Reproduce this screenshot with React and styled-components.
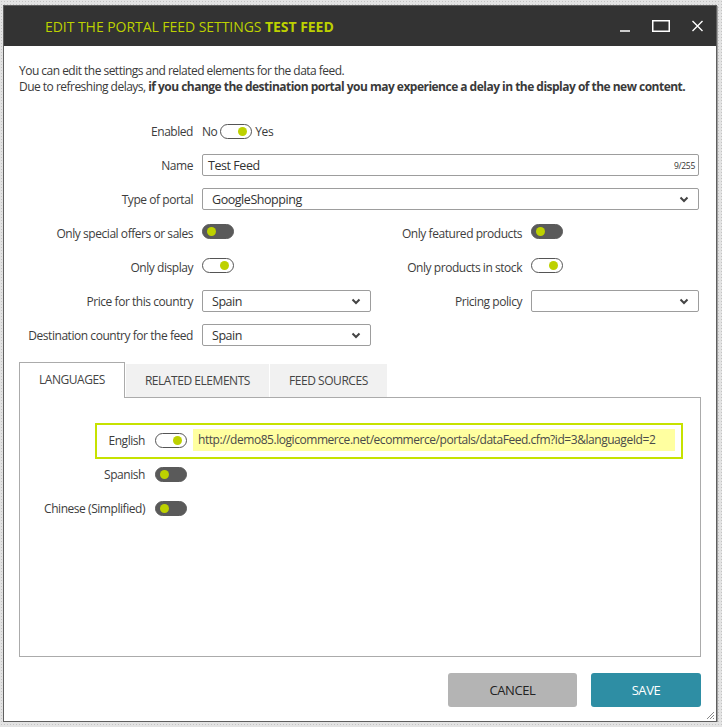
import styled, { createGlobalStyle } from "styled-components";

const lime = "#bdd100";

const GlobalStyle = createGlobalStyle`
  html, body { margin: 0; }
  body {
    background-color: #e3e3e3;
    background-image: radial-gradient(#c3c3c3 0.7px, transparent 0.9px);
    background-size: 3px 3px;
    font-family: "Open Sans", "Liberation Sans", sans-serif;
    font-size: 12px;
    letter-spacing: -0.45px;
    color: #3a3a3a;
  }
`;

const Window = styled.div`
  position: relative;
  box-sizing: border-box;
  width: 714px;
  height: 717px;
  margin: 5px 0 0 3px;
  background: #fff;
  border: 1px solid #5f5f5f;
  box-shadow: 1px 1px 0 #a0a0a0;
  display: flex;
  flex-direction: column;
`;

const TitleBar = styled.header`
  height: 40px;
  flex: none;
  background: #333;
  display: flex;
  align-items: center;
  justify-content: space-between;
  padding: 0 13px 0 41px;
`;

const Title = styled.h1`
  margin: 0;
  font-size: 14px;
  font-weight: 400;
  letter-spacing: -0.05px;
  color: ${lime};
  b { font-weight: 700; }
`;

const WindowControls = styled.div`
  display: flex;
  align-items: center;
  gap: 22px;
  svg { display: block; }
`;

const Body = styled.div`
  flex: 1;
  display: flex;
  flex-direction: column;
  padding: 17px 15px 14px 15px;
  min-height: 0;
`;

const Intro = styled.p`
  margin: 0;
  line-height: 16px;
  letter-spacing: -0.52px;
  b { font-weight: 700; }
`;

const FormGrid = styled.div`
  margin-top: 25px;
  display: grid;
  grid-template-columns: 174px 169px 142px 168px;
  grid-auto-rows: 22px;
  column-gap: 9px;
  row-gap: 12px;
  align-items: center;
`;

const Label = styled.label`
  text-align: right;
  white-space: nowrap;
  color: #3d3d3d;
`;

const Inline = styled.div`
  grid-column: 2 / 5;
  display: flex;
  align-items: center;
  gap: 3px;
`;

const Toggle = styled.span`
  position: relative;
  display: inline-block;
  flex: none;
  box-sizing: border-box;
  width: 32px;
  height: 15px;
  border-radius: 8px;
  border: 1px solid ${(p) => (p.$on ? "#555" : "#5a5a5a")};
  background: ${(p) => (p.$on ? "#fff" : "#5a5a5a")};
  &::after {
    content: "";
    position: absolute;
    top: 2px;
    ${(p) => (p.$on ? "right: 4px;" : "left: 4px;")}
    width: 9px;
    height: 9px;
    border-radius: 50%;
    background: ${lime};
  }
`;

const Field = styled.div`
  position: relative;
  grid-column: ${(p) => p.$span || "auto"};
  box-sizing: border-box;
  height: 22px;
  border: 1px solid #9d9d9d;
  border-radius: 2px;
  display: flex;
  align-items: center;
  justify-content: space-between;
  padding: 0 9px 0 ${(p) => p.$pad || 9}px;
  color: #333;
  font-size: 12.5px;
  background: #fff;
`;

const Counter = styled.span`
  font-size: 8.5px;
  letter-spacing: -0.3px;
  color: #333;
  margin-right: -6px;
`;

const Chevron = () => (
  <svg width="10" height="7" viewBox="0 0 10 7">
    <polyline points="1.5,1.5 5,5 8.5,1.5" fill="none" stroke="#444" strokeWidth="2" />
  </svg>
);

const Tabs = styled.div`
  margin-top: 16px;
  flex: 1;
  display: flex;
  flex-direction: column;
`;

const TabList = styled.div`
  display: flex;
  align-items: flex-end;
  gap: 1px;
`;

const Tab = styled.div`
  position: relative;
  z-index: 1;
  box-sizing: border-box;
  height: ${(p) => (p.$active ? 36 : 33)}px;
  margin-bottom: ${(p) => (p.$active ? -1 : 0)}px;
  padding: ${(p) => (p.$active ? "0 19px 2px" : "0 19px")};
  display: flex;
  align-items: center;
  background: ${(p) => (p.$active ? "#fff" : "#f1f1f1")};
  border: ${(p) => (p.$active ? "1px solid #ababab" : "none")};
  border-bottom: none;
  color: #444;
  text-transform: uppercase;
  white-space: nowrap;
`;

const Panel = styled.div`
  flex: 1;
  border: 1px solid #ababab;
  padding: 31px 0 0 0;
  display: flex;
  flex-direction: column;
  gap: 12px;
`;

const LangRow = styled.div`
  position: relative;
  height: 22px;
  display: flex;
  align-items: center;
  ${(p) =>
    p.$highlight &&
    `
    &::before {
      content: "";
      position: absolute;
      left: 75px;
      width: 588px;
      top: -6px;
      bottom: -8px;
      box-sizing: border-box;
      border: 2px solid #c6e200;
      pointer-events: none;
    }
  `}
`;

const LangLabel = styled.span`
  width: 125px;
  margin-right: 10px;
  text-align: right;
  white-space: nowrap;
  color: #3d3d3d;
`;

const UrlField = styled.div`
  margin-left: 6px;
  width: 482px;
  height: 22px;
  box-sizing: border-box;
  padding: 0 5px;
  line-height: 22px;
  background: #ffffa0;
  color: #4a4a4a;
  white-space: nowrap;
  overflow: hidden;
`;

const Footer = styled.div`
  margin-top: 16px;
  display: flex;
  justify-content: flex-end;
  gap: 14px;
`;

const Button = styled.button`
  width: ${(p) => p.$width}px;
  height: 34px;
  border: none;
  border-radius: 3px;
  font-family: inherit;
  font-size: 13px;
  letter-spacing: -0.4px;
  text-transform: uppercase;
  background: ${(p) => (p.$primary ? "#2e8ea4" : "#b4b4b4")};
  color: ${(p) => (p.$primary ? "#fff" : "#222")};
  cursor: pointer;
`;

const Grip = styled.svg`
  position: absolute;
  right: 1px;
  bottom: 1px;
`;

const languages = [
  { name: "English", on: true, url: "http://demo85.logicommerce.net/ecommerce/portals/dataFeed.cfm?id=3&languageId=2" },
  { name: "Spanish", on: false },
  { name: "Chinese (Simplified)", on: false },
];

export default function App() {
  return (
    <>
      <GlobalStyle />
      <Window>
        <TitleBar>
          <Title>
            EDIT THE PORTAL FEED SETTINGS <b>TEST FEED</b>
          </Title>
          <WindowControls>
            <svg width="10" height="12" viewBox="0 0 10 12">
              <line x1="0" y1="11" x2="10" y2="11" stroke="#fff" strokeWidth="1.5" />
            </svg>
            <svg width="18" height="12" viewBox="0 0 18 12">
              <rect x="0.75" y="0.75" width="16.5" height="10.5" fill="none" stroke="#fff" strokeWidth="1.5" />
            </svg>
            <svg width="11" height="12" viewBox="0 0 11 12">
              <path d="M0.5 1 L10.5 11 M10.5 1 L0.5 11" stroke="#fff" strokeWidth="1.4" />
            </svg>
          </WindowControls>
        </TitleBar>

        <Body>
          <Intro>
            You can edit the settings and related elements for the data feed.
            <br />
            Due to refreshing delays, <b>if you change the destination portal you may experience a delay in the display of the new content.</b>
          </Intro>

          <FormGrid>
            <Label>Enabled</Label>
            <Inline>
              No <Toggle $on /> Yes
            </Inline>

            <Label>Name</Label>
            <Field $span="2 / 5" $pad={5}>
              Test Feed
              <Counter>9/255</Counter>
            </Field>

            <Label>Type of portal</Label>
            <Field $span="2 / 5">
              GoogleShopping
              <Chevron />
            </Field>

            <Label>Only special offers or sales</Label>
            <div><Toggle /></div>
            <Label>Only featured products</Label>
            <div><Toggle /></div>

            <Label>Only display</Label>
            <div><Toggle $on /></div>
            <Label>Only products in stock</Label>
            <div><Toggle $on /></div>

            <Label>Price for this country</Label>
            <Field>
              Spain
              <Chevron />
            </Field>
            <Label>Pricing policy</Label>
            <Field>
              <span />
              <Chevron />
            </Field>

            <Label>Destination country for the feed</Label>
            <Field>
              Spain
              <Chevron />
            </Field>
          </FormGrid>

          <Tabs>
            <TabList>
              <Tab $active>Languages</Tab>
              <Tab>Related elements</Tab>
              <Tab>Feed sources</Tab>
            </TabList>
            <Panel>
              {languages.map((l) => (
                <LangRow key={l.name} $highlight={!!l.url}>
                  <LangLabel>{l.name}</LangLabel>
                  <Toggle $on={l.on} />
                  {l.url && <UrlField>{l.url}</UrlField>}
                </LangRow>
              ))}
            </Panel>
          </Tabs>

          <Footer>
            <Button $width={129}>Cancel</Button>
            <Button $width={110} $primary>Save</Button>
          </Footer>
        </Body>

        <Grip width="9" height="9" viewBox="0 0 9 9">
          <path d="M8 1 L1 8 M8 4 L4 8 M8 7 L7 8" stroke="#888" strokeWidth="1" />
        </Grip>
      </Window>
    </>
  );
}
